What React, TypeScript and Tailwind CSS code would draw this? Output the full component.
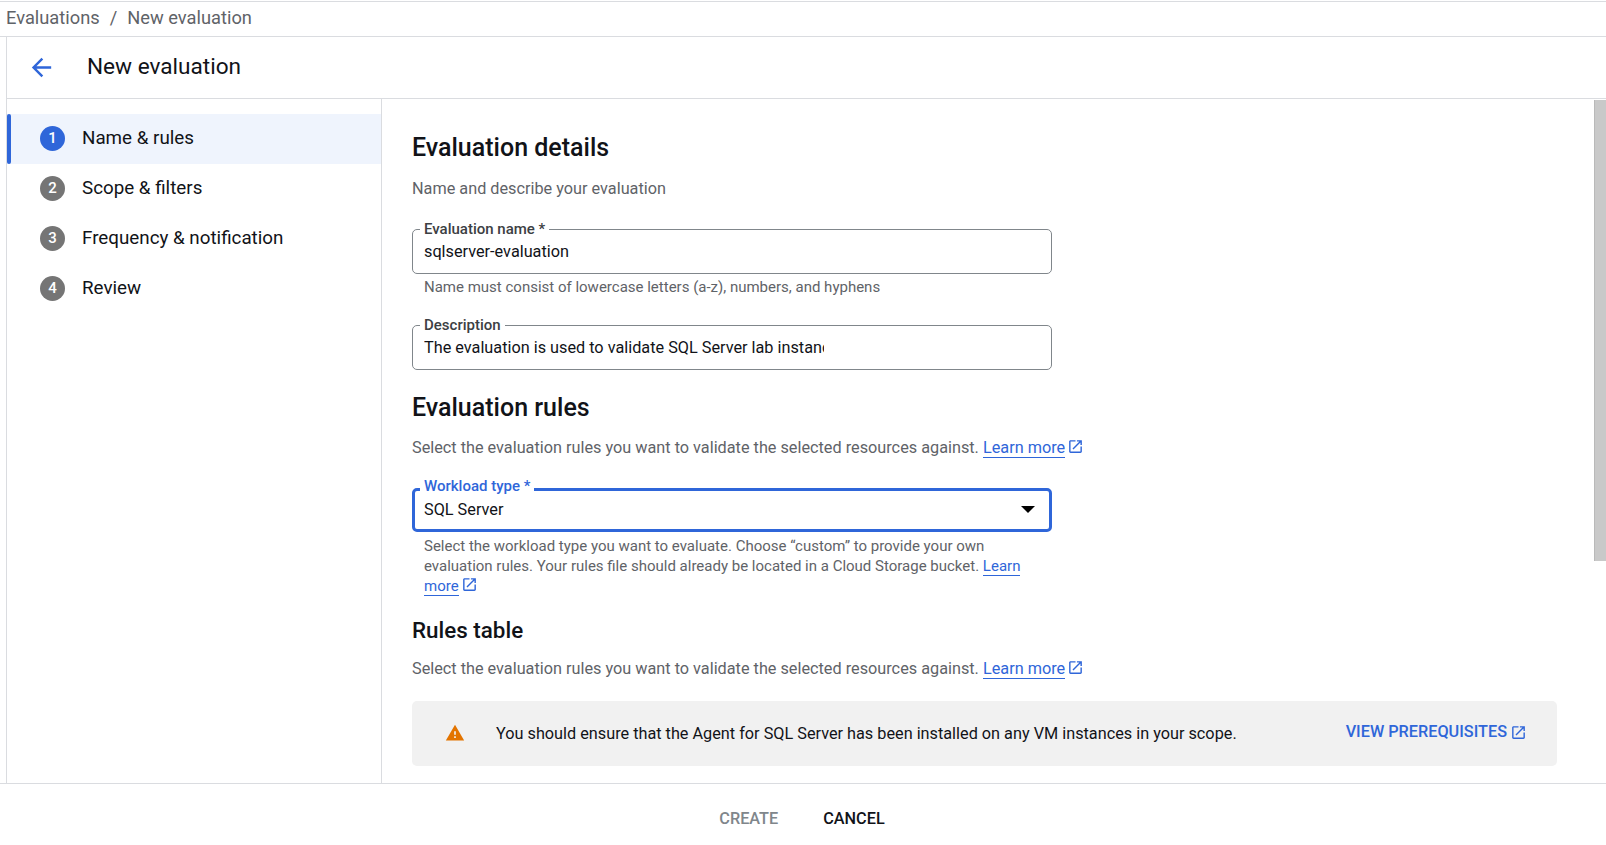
const FONT = "font-['Roboto',sans-serif]"

function OpenInNew({ className }: { className: string }) {
  return (
    <svg viewBox="0 0 24 24" fill="currentColor" aria-hidden="true" className={className}>
      <path d="M19 19H5V5h7V3H5c-1.11 0-2 .9-2 2v14c0 1.1.89 2 2 2h14c1.1 0 2-.9 2-2v-7h-2v7zM14 3v2h3.59l-9.83 9.83 1.41 1.41L19 6.41V10h2V3h-7z" />
    </svg>
  )
}

function LearnMore() {
  return (
    <>
      <a className="text-[#2f66d9] border-b border-[#2f66d9]">Learn more</a>
      <OpenInNew className="inline-block h-[17px] w-[17px] ml-[2px] align-[-2px] text-[#2f66d9]" />
    </>
  )
}

const STEPS = ['Name & rules', 'Scope & filters', 'Frequency & notification', 'Review']

function Step({ n, label, active }: { n: number; label: string; active: boolean }) {
  return (
    <div className={`relative flex h-[50px] items-center pb-[2px] pl-[33px] ${active ? 'bg-[#eff4fd]' : ''}`}>
      {active && <div className="absolute left-0 top-0 h-full w-1 rounded-[2px] bg-[#2f66d9]" />}
      <div
        className={`flex h-[25px] w-[25px] items-center justify-center rounded-full text-[15px] font-medium text-white ${
          active ? 'bg-[#2f66d9]' : 'bg-[#757575]'
        }`}
      >
        {n}
      </div>
      <span className="ml-[17px] text-[18.8px] leading-6 text-[#111318]">{label}</span>
    </div>
  )
}

function Field({ label, value, clip }: { label: string; value: string; clip?: boolean }) {
  return (
    <div className="relative flex h-[45px] w-[640px] items-center rounded-[5px] border border-[#80868b] pl-[11px] pr-3">
      <span className="absolute -top-[10px] left-[7px] bg-white px-1 text-[15px] font-medium leading-[18px] text-[#3c4043]">
        {label}
      </span>
      <span className={`text-[16.25px] leading-6 text-[#111318] whitespace-nowrap ${clip ? 'w-[400px] overflow-hidden' : ''}`}>
        {value}
      </span>
    </div>
  )
}

export default function App() {
  return (
    <div className={`${FONT} h-[845px] w-[1606px] overflow-hidden bg-white flex flex-col`}>
      <div className="mt-px flex h-[36px] items-center border-y border-[#dadce0] pb-[2px] pl-[6px] text-[18.3px] text-[#5f6368]">
        <span>Evaluations</span>
        <span className="mx-[10px]">/</span>
        <span>New evaluation</span>
      </div>

      <div className="ml-[6px] flex min-h-0 flex-1 flex-col border-l border-[#dadce0]">
        <div className="flex h-[62px] items-center border-b border-[#dadce0] pl-[20px]">
          <svg viewBox="0 0 24 24" fill="#2f66d9" aria-hidden="true" className="h-[29px] w-[29px]">
            <path d="M20 11H7.83l5.59-5.59L12 4l-8 8 8 8 1.41-1.41L7.83 13H20v-2z" />
          </svg>
          <h1 className="mb-[2px] ml-[31px] text-[22.6px] font-normal text-[#111318]">New evaluation</h1>
        </div>

        <div className="flex min-h-0 flex-1">
          <nav className="w-[375px] shrink-0 border-r border-[#dadce0] pt-[15px]">
            {STEPS.map((label, i) => (
              <Step key={label} n={i + 1} label={label} active={i === 0} />
            ))}
          </nav>

          <main className="min-w-0 flex-1 overflow-hidden pl-[30px] pr-[37px]">
            <h2 className="mt-[33px] text-[25px] font-medium leading-8 text-[#111318]">Evaluation details</h2>
            <p className="mt-[14px] text-[16.25px] leading-[22px] text-[#5f6368]">Name and describe your evaluation</p>

            <div className="mt-[29px]">
              <Field label="Evaluation name *" value="sqlserver-evaluation" />
            </div>
            <p className="mt-[3px] pl-3 text-[15px] leading-5 text-[#5f6368]">
              Name must consist of lowercase letters (a-z), numbers, and hyphens
            </p>

            <div className="mt-[28px]">
              <Field label="Description" value="The evaluation is used to validate SQL Server lab instances" clip />
            </div>

            <h2 className="mt-[22px] text-[25px] font-medium leading-8 text-[#111318]">Evaluation rules</h2>
            <p className="mt-[13px] text-[16.25px] leading-[22px] text-[#5f6368]">
              Select the evaluation rules you want to validate the selected resources against. <LearnMore />
            </p>

            <div className="relative mt-[29px] flex h-[44px] w-[640px] items-center justify-between rounded-[5px] border-[3px] border-[#2f66d9] pl-[9px] pr-[14px]">
              <span className="absolute -top-[14px] left-[5px] bg-white px-1 text-[15px] font-medium leading-[18px] text-[#2f66d9]">
                Workload type *
              </span>
              <span className="text-[16.25px] leading-6 text-[#111318]">SQL Server</span>
              <div className="mb-[2px] h-0 w-0 border-x-[7px] border-t-[7px] border-x-transparent border-t-black" />
            </div>
            <p className="mt-[4px] w-[620px] pl-3 text-[15px] leading-5 text-[#5f6368]">
              Select the workload type you want to evaluate. Choose “custom” to provide your own evaluation rules. Your
              rules file should already be located in a Cloud Storage bucket. <LearnMore />
            </p>

            <h3 className="mt-[18px] text-[22.4px] font-medium leading-8 text-[#111318]">Rules table</h3>
            <p className="mt-[12px] text-[16.25px] leading-[22px] text-[#5f6368]">
              Select the evaluation rules you want to validate the selected resources against. <LearnMore />
            </p>

            <div className="mt-[21px] flex h-[65px] items-center rounded-[5px] bg-[#f1f1f1] pl-[33px] pr-[30px] pt-[2px]">
              <svg viewBox="0 0 24 24" fill="#e37400" aria-hidden="true" className="-mt-[3px] h-[20px] w-[20px] shrink-0">
                <path d="M1 21h22L12 2 1 21zm12-3h-2v-2h2v2zm0-4h-2v-4h2v4z" />
              </svg>
              <span className="ml-[31px] flex-1 text-[16.25px] text-[#111318]">
                You should ensure that the Agent for SQL Server has been installed on any VM instances in your scope.
              </span>
              <span className="-mt-[4px] flex items-center text-[16.25px] font-medium text-[#2f66d9]">
                VIEW PREREQUISITES
                <OpenInNew className="ml-[3px] h-[17px] w-[17px]" />
              </span>
            </div>
          </main>

          <div className="w-3 shrink-0 pt-px">
            <div className="h-[461px] border-l border-[#b9b9b9] bg-[#c9c9c9]" />
          </div>
        </div>
      </div>

      <div className="flex h-[62px] shrink-0 items-center justify-center gap-[45px] border-t border-[#dadce0] pr-[2px] pt-[9px] text-[16.25px] font-medium">
        <span className="text-[#80868b]">CREATE</span>
        <span className="text-[#111318]">CANCEL</span>
      </div>
    </div>
  )
}
